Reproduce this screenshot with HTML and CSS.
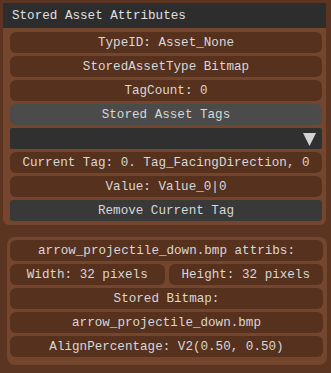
FILE: index.html
```html
<!DOCTYPE html>
<html lang="en">

<head>
    <meta charset="UTF-8">
    <meta name="viewport" content="width=device-width, initial-scale=1.0">
    <title>Stored Asset Attributes</title>
    <link rel="stylesheet" href="styles.css">
</head>

<body>
    <div class="window">
        <div class="title">Stored Asset Attributes</div>
        <div class="group first">
            <div class="row">TypeID: Asset_None</div>
            <div class="row">StoredAssetType Bitmap</div>
            <div class="row">TagCount: 0</div>
            <div class="row button">Stored Asset Tags</div>
            <div class="row combo">
                <svg class="arrow" width="14" height="14" viewBox="0 0 14 14">
                    <polygon points="0,1 13,1 6.5,14" fill="#d4d4d4" />
                </svg>
            </div>
            <div class="row">Current Tag: 0. Tag_FacingDirection, 0</div>
            <div class="row">Value: Value_0|0</div>
            <div class="row button dark">Remove Current Tag</div>
        </div>
    </div>

    <!-- bitmap info -->
    <div class="group second">
        <div class="row">arrow_projectile_down.bmp attribs:</div>
        <div class="split">
            <div class="row">Width: 32 pixels</div>
            <div class="row">Height: 32 pixels</div>
        </div>
        <div class="row">Stored Bitmap:</div>
        <div class="row">arrow_projectile_down.bmp</div>
        <div class="row">AlignPercentage: V2(0.50, 0.50)</div>
    </div>
</body>

</html>
```

FILE: styles.css
```css
body {
    margin: 0;
    background-color: #5b3521;
    color: #d8d8d8;
    font-family: 'Liberation Mono', 'DejaVu Sans Mono', monospace;
    font-size: 12.6px;
    width: 331px;
    height: 373px;
    overflow: hidden;
}

.window {
    margin: 3px 0 0 3px;
    width: 323px;
}

.title {
    height: 25px;
    line-height: 27px;
    padding-left: 9px;
    background-color: #2d2d2e;
    color: #e0e0e0;
}

.group {
    display: flex;
    flex-direction: column;
    gap: 3px;
    background-color: #74462d;
}

.group.first {
    padding: 4px 4px 4px 7px;
    border-radius: 0 0 6px 6px;
}

.group.second {
    margin: 12px 0 0 7px;
    width: 320px;
    box-sizing: border-box;
    padding: 3px 4px 8px 3px;
    border-radius: 8px;
}

.row {
    height: 21px;
    line-height: 23px;
    text-align: center;
    white-space: nowrap;
    background-color: #56311e;
    border-radius: 6px;
    overflow: hidden;
}

.button {
    background-color: #4b4b4c;
}

.button.dark {
    background-color: #39393a;
    border-radius: 3px;
}

.combo {
    display: flex;
    justify-content: flex-end;
    align-items: center;
    padding-right: 5px;
    background-color: #303031;
    border-radius: 2px;
}

.split {
    display: flex;
    gap: 4px;
}

.split .row {
    flex: 1;
}
```
